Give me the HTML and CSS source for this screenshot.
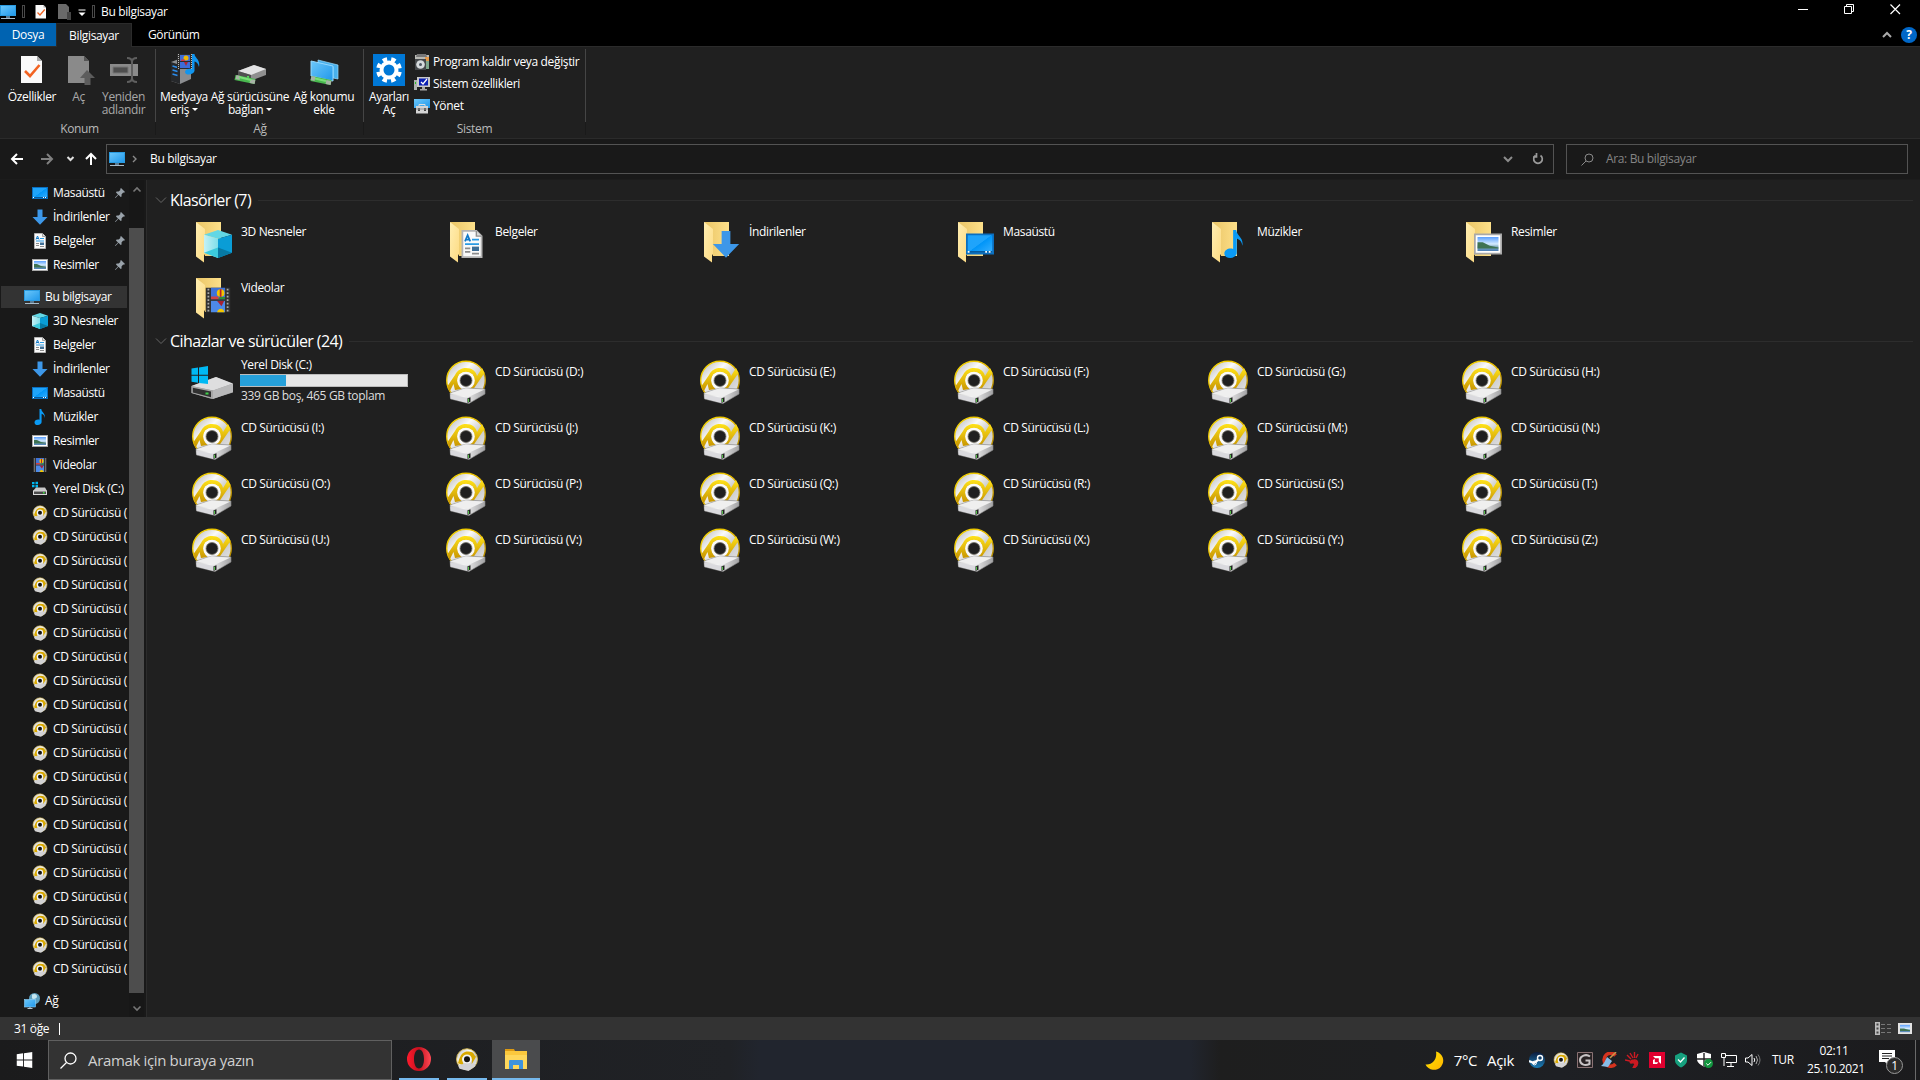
FILE: index.html
```html
<!DOCTYPE html>
<html lang="tr">
<head>
  <meta charset="UTF-8">
  <title>Bu bilgisayar</title>
  <link rel="stylesheet" href="styles.css">
</head>

<body>

  <!-- shared icons -->
  <svg class="sprite" width="0" height="0">
    <defs>
      <linearGradient id="g-screen" x1="0" y1="0" x2="1" y2="1">
        <stop offset="0" stop-color="#6cc8fb"/><stop offset="1" stop-color="#1f97ea"/>
      </linearGradient>
      <linearGradient id="g-desk" x1="0" y1="0" x2="1" y2="1">
        <stop offset="0" stop-color="#1ea4fb"/><stop offset=".48" stop-color="#1fa4fb"/><stop offset=".5" stop-color="#0095f8"/><stop offset="1" stop-color="#3db2ff"/>
      </linearGradient>
      <linearGradient id="g-folder" x1="0" y1="0" x2="1" y2="0">
        <stop offset="0" stop-color="#eac566"/><stop offset="1" stop-color="#fde08a"/>
      </linearGradient>
      <linearGradient id="g-flap" x1="0" y1="0" x2="1" y2="1">
        <stop offset="0" stop-color="#ffeeb2"/><stop offset="1" stop-color="#fddb83"/>
      </linearGradient>
      <linearGradient id="g-disc" x1="0" y1="0" x2="1" y2="1">
        <stop offset="0" stop-color="#b0b0b0"/><stop offset=".35" stop-color="#fafafa"/><stop offset=".6" stop-color="#c9c9c9"/><stop offset="1" stop-color="#eeeeee"/>
      </linearGradient>
      <linearGradient id="g-swoosh" x1="0" y1="0" x2="0" y2="1">
        <stop offset="0" stop-color="#ffe21a"/><stop offset="1" stop-color="#c49000"/>
      </linearGradient>
      <linearGradient id="g-edge" x1="0" y1="0" x2="1" y2="1">
        <stop offset="0" stop-color="#f5d800"/><stop offset=".5" stop-color="#e6b800"/><stop offset="1" stop-color="#9a7400"/>
      </linearGradient>
      <linearGradient id="g-drive" x1="0" y1="0" x2="1" y2="0">
        <stop offset="0" stop-color="#cfcfcf"/><stop offset=".4" stop-color="#f4f4f4"/><stop offset="1" stop-color="#a2a2a4"/>
      </linearGradient>
      <linearGradient id="g-sky" x1="0" y1="0" x2="0" y2="1">
        <stop offset="0" stop-color="#5a9fff"/><stop offset=".5" stop-color="#d5ebff"/><stop offset=".7" stop-color="#7fa9c0"/><stop offset="1" stop-color="#4c7fb8"/>
      </linearGradient>
      <linearGradient id="g-cube" x1="0" y1="0" x2="1" y2="0">
        <stop offset="0" stop-color="#c4f1f6"/><stop offset="1" stop-color="#7fdfea"/>
      </linearGradient>
      <linearGradient id="g-opera" x1="0" y1="0" x2="1" y2="0">
        <stop offset="0" stop-color="#ff1b2d"/><stop offset=".5" stop-color="#c4101e"/><stop offset="1" stop-color="#ff4a55"/>
      </linearGradient>
      <linearGradient id="g-steam" x1="0" y1="0" x2="0" y2="1">
        <stop offset="0" stop-color="#0c1b3c"/><stop offset="1" stop-color="#1a7fb8"/>
      </linearGradient>
      <linearGradient id="g-moon" x1="0" y1="0" x2="1" y2="1">
        <stop offset="0" stop-color="#ffe600"/><stop offset="1" stop-color="#ffb400"/>
      </linearGradient>
    </defs>

    <symbol id="pc" viewBox="0 0 16 16">
      <rect x=".5" y="1.5" width="15" height="10" fill="url(#g-screen)" stroke="#2a9be0"/>
      <path d="M6 12h4v2H6z" fill="#5b7c94"/>
      <path d="M1 14h14v1H1z" fill="#a8bccb"/>
    </symbol>

    <symbol id="desktop" viewBox="0 0 16 16">
      <rect x=".5" y="2.5" width="15" height="11" fill="url(#g-desk)" stroke="#0a6fc0"/>
      <path d="M1 12.500h14" stroke="#075a9c"/>
      <path d="M1 12.500h1M11 12.500h1M13 12.500h1" stroke="#fff"/>
    </symbol>

    <symbol id="downloads" viewBox="0 0 16 16">
      <path d="M5.500.5h5v7.500h5L8 15.800.5 8h5z" fill="#3d97e8"/>
    </symbol>

    <symbol id="docs" viewBox="0 0 16 16">
      <path d="M2.500.500h8l3 3v12h-11z" fill="#fafafa" stroke="#b4b4b4"/>
      <path d="M10.500.5v3h3" fill="#ddd" stroke="#909090" stroke-width=".8"/>
      <path d="M4 6.500L5.500 3 7 6.500M4.500 5.500h2" fill="none" stroke="#1079c8"/>
      <path d="M8 5.500h4M4 8h8" stroke="#2a9ae4"/>
      <path d="M4 10.500h3M4 12.500h3M8 13.500h4" stroke="#8c8c8c"/>
      <path d="M8 9.500h4v2.500H8z" fill="#3f6f97"/>
    </symbol>

    <symbol id="pics" viewBox="0 0 16 16">
      <rect x=".5" y="2.500" width="15" height="11" fill="#fff" stroke="#a9a9a9"/>
      <rect x="2" y="4" width="12" height="8" fill="url(#g-sky)"/>
      <path d="M2 7l3 0 4 2 5 1v.5H2z" fill="#3f7353"/>
    </symbol>

    <symbol id="music" viewBox="0 0 16 16">
      <path d="M7.500 0h1.800c.3 3.500 4.300 4.200 3.500 9-.3-2.600-1.700-3.600-3.200-4.200V13c0 1.600-1.700 3-3.700 3S2.500 15 2.500 13.400c0-2 2.500-3.300 5-2.600z" fill="#0a9af5"/>
    </symbol>

    <symbol id="video" viewBox="0 0 16 16">
      <path d="M1 1h14v14H1z" fill="#333"/>
      <path d="M4 1h8v6.500H4z" fill="#3f73d8"/><path d="M4 8.500h8V15H4z" fill="#4d8ae8"/>
      <path d="M4 6h4l1 1.500H4z" fill="#d04444"/><path d="M9 6.300h3v1.200H8z" fill="#2c8b3c"/>
      <circle cx="9.500" cy="4" r="2.200" fill="#f3c600"/><path d="M9.500 1.800v4.400" stroke="#b8242c"/>
      <path d="M7.500 8.500h4l-1.500 3z" fill="#a82231"/><path d="M7.500 15c.3-2.700 4-2.700 4.200 0z" fill="#f3c600"/>
      <path d="M2.500 1.500v13M13.500 1.500v13" stroke="#aaa" stroke-dasharray="1 1"/>
    </symbol>

    <symbol id="cube" viewBox="0 0 16 16">
      <path d="M8 0l8 2.700L8 5 0 2.700z" fill="#62d7e5"/>
      <path d="M0 2.700L8 5v11l-8-3z" fill="url(#g-cube)"/>
      <path d="M16 2.700L8 5v11l8-3z" fill="#0a9dd6"/>
      <path d="M0 13l8-3v6z" fill="#3bcbdd"/><path d="M16 13l-8-3v6z" fill="#0779a3"/>
    </symbol>

    <symbol id="winflag" viewBox="0 0 16 16">
      <path d="M0 2.200L6.600 1.300v6.200H0zM7.500 1.200L16 0v7.500H7.500zM0 8.400h6.600v6.200L0 13.700zM7.500 8.400H16V16l-8.500-1.200z"/>
    </symbol>

    <symbol id="drive16" viewBox="0 0 16 16">
      <path d="M0 1h2.500v2.200H0zM3.500.7H6v2.500H3.500zM0 4h2.500v2.200H0zM3.500 4H6v2.500H3.500z" fill="#00b7f1"/>
      <path d="M4 6.500h9l2 3.500H1z" fill="#c8c8c8"/><path d="M1 9.500h14V14H1z" fill="#d9d9d9"/>
      <path d="M2 10.500h12V13H2z" fill="#4a4a4a"/><path d="M11 11h1.500v1.500H11z" fill="#3be23b"/>
    </symbol>

    <symbol id="disc" viewBox="0 0 40 44">
      <circle cx="20" cy="20.500" r="19.300" fill="url(#g-disc)" stroke="url(#g-edge)" stroke-width="1.400"/>
      <path d="M1.500 26L9 15C12 9.500 16 8 20 8c6 0 10 3.500 11 8l5-8 2.500 5-11 16h-5c5-4 6.500-8 5-12.500-1-3-4-4.500-7.500-4.500-4 0-7 2-8 5-1 4 0 9 3.500 12L9 30l-1.500-6L3.500 32z" fill="url(#g-swoosh)"/>
      <circle cx="20" cy="20.500" r="8.800" fill="#fafafa"/>
      <circle cx="20" cy="20.500" r="6" fill="#202020" stroke="#77756a" stroke-width=".8"/>
      <path d="M4 33l16-5 19 1v5l-16 9.500L4.500 39z" fill="url(#g-drive)" stroke="#8a8a8a" stroke-width=".6"/>
      <path d="M4 33.500l15-5L38.500 29.500 22.500 37z" fill="#efefef"/>
      <path d="M4.300 34.500L22 38v5l-17.500-4.500z" fill="#dadade"/>
      <path d="M21.500 38.300l3-1v4.500l-3 1.200z" fill="#222"/><path d="M22.500 38.700v3.300" stroke="#57c04b"/>
    </symbol>

    <symbol id="disc16" viewBox="0 0 16 16">
      <circle cx="8" cy="7.800" r="7" fill="url(#g-disc)" stroke="#d8bb50" stroke-width=".6"/>
      <path d="M2 10.500C3.500 4 6 2.600 9 2.700s3.500 1.300 4 2.500l1 1-4 7c2-3 2-7-2-7.500S4.500 8 6 12z" fill="#d9a900"/>
      <circle cx="8" cy="7.800" r="3.200" fill="#f4f4f4"/><circle cx="8" cy="7.800" r="2" fill="#141414"/>
      <path d="M2 12l5-1.500 6.500.5v1.500L9 15.700l-6-1.500z" fill="#d2d2d4"/>
    </symbol>

    <symbol id="folder" viewBox="0 0 48 48">
      <path d="M8 4h25v34H17z" fill="url(#g-folder)"/>
      <path d="M8 4l9 7v25l-1 1v7.500L8 38.500z" fill="url(#g-flap)"/>
    </symbol>

    <symbol id="cdrive" viewBox="0 0 48 48">
      <path d="M3.500 28L28 19l17 7v8.500L24 41 3.500 35z" fill="#9c9c9c"/>
      <path d="M3.500 28L28 19l17 6.500-20 7z" fill="#dededf"/>
      <path d="M25 32.500l20-7v8.500l-20 7z" fill="#b9b9ba"/>
      <path d="M3.500 28L25 32.500V41L3.500 35z" fill="#a7a7a7"/>
      <path d="M4.800 29.700L23 33.500v5.800L4.800 34.500z" fill="#303030"/>
      <path d="M17.500 34.500h3v2h-3z" fill="#3fd24a"/>
      <path d="M3.500 10.500l6.500-1v7.300H3.500zM11 9.400l9-1.400v8.800h-9zM3.500 17.800H10v7l-6.500-1zM11 17.800h9V26l-9-1z" fill="#00b9f4"/>
    </symbol>

    <symbol id="pin" viewBox="0 0 10 10">
      <path d="M6 0l4 4-1 .8-.8-.2-1.700 1.800.1 2-.9.6L3.500 6.800.5 10 0 9.600 3 6.400 1 4.400l.6-.9 2 .1L5.400 1.900 5.200 1z" fill="#9aa3ab"/>
    </symbol>

    <symbol id="net" viewBox="0 0 16 16">
      <circle cx="10.500" cy="5.500" r="5.500" fill="#5d9fbe"/><path d="M8 1.500c3-1.500 5 0 5 2s-3 3-5 2z" fill="#c6e7f1"/>
      <rect x=".5" y="6.500" width="11" height="7.500" fill="url(#g-screen)" stroke="#8fd2fa" stroke-width=".6"/>
      <path d="M3.500 15.500h5M6 14v1.500" stroke="#b8c8d2"/>
    </symbol>

    <symbol id="check" viewBox="0 0 32 32">
      <path d="M5 2h16l5 5v22H5z" fill="#fafafa"/><path d="M21 2v5h5z" fill="#a9a9a9"/>
      <path d="M9 17l5 5 9.500-11" fill="none" stroke="#f26322" stroke-width="2.600"/>
    </symbol>

    <symbol id="open" viewBox="0 0 32 32">
      <path d="M5 2h16l5 5v22H5z" fill="#8a8a8a"/><path d="M21 2v5h5z" fill="#555"/>
      <path d="M24 16l8 8h-4.500v7h-6v-7H17z" fill="#5c5c5c"/>
    </symbol>
  </svg>

  <div class="titlebar">
    <svg class="ic16"><use href="#pc"/></svg>
    <span class="tick first"></span>
    <svg class="ic16 t-check"><use href="#check"/></svg>
    <svg class="t-open" width="14" height="16" viewBox="0 0 14 16"><path d="M1 0h8l3 3v12H1z" fill="#6a6a6a"/><path d="M10 8h4v8h-4z" fill="#454545"/></svg>
    <svg class="t-more" width="8" height="8" viewBox="0 0 8 8"><path d="M.5 1h7" stroke="#fff"/><path d="M.5 3.500h7L4 7z" fill="#fff"/></svg>
    <span class="tick"></span>
    <span class="title">Bu bilgisayar</span>
    <div class="controls">
      <svg width="11" height="11" viewBox="0 0 11 11"><path d="M0 5.500h10" stroke="#fff"/></svg>
      <svg width="11" height="11" viewBox="0 0 11 11"><path d="M.5 2.500h7v7h-7zM2.500 2.500v-2h7v7h-2" fill="none" stroke="#fff"/></svg>
      <svg width="11" height="11" viewBox="0 0 11 11"><path d="M.5.500l9.500 9.500M10 .5L.5 10" stroke="#fff" stroke-width="1.200"/></svg>
    </div>
  </div>

  <div class="tabs">
    <span class="tab file">Dosya</span>
    <span class="tab active">Bilgisayar</span>
    <span class="tab view">Görünüm</span>
    <svg class="collapse" width="10" height="8" viewBox="0 0 10 8"><path d="M1 6l4-4 4 4" fill="none" stroke="#aaa" stroke-width="2"/></svg>
    <span class="help">?</span>
  </div>

  <div class="ribbon">
    <div class="group g-konum">
      <div class="tools">
        <div class="tool w50"><svg class="ic32"><use href="#check"/></svg>Özellikler</div>
        <div class="tool w43 off"><svg class="ic32"><use href="#open"/></svg>Aç</div>
        <div class="tool w47 off">
          <svg class="ic32" viewBox="0 0 32 32"><path d="M2 10h28v12H2z" fill="#8a8a8a"/><path d="M5 13h15v6H5z" fill="#4e4e4e" stroke="#777"/><path d="M19 4c3 0 5 1 5 4 0-3 2-4 5-4M24 7v18M19 28c3 0 5-1 5-4 0 3 2 4 5 4" fill="none" stroke="#5f5f5f" stroke-width="2"/></svg>
          Yeniden<br>adlandır
        </div>
      </div>
      <div class="caption">Konum</div>
    </div>
    <div class="group g-ag">
      <div class="tools">
        <div class="tool w48">
          <svg class="ic32" viewBox="0 0 32 32">
            <path d="M3 8l8-3 12 2v18l-11 5-9-3z" fill="#8b8d90"/><path d="M3 8l9 3v19l-9-3z" fill="#26282b"/>
            <path d="M4.500 12l5 1.500M4.500 16l5 1.500M4.500 20l5 1.500" stroke="#2b8bea" stroke-width="1.500"/>
            <path d="M9 0h16v15H9z" fill="#2b2b2b"/><path d="M12 1h10v6H12zM12 8h10v6H12z" fill="#3d6cd8"/>
            <circle cx="18" cy="4" r="2.500" fill="#f0b800"/><path d="M13 5.500h4v1.500h-4z" fill="#cf3b46"/><path d="M16 8h4l-2 4z" fill="#ae2530"/>
            <path d="M10.500 0v15M23.500 0v15" stroke="#bbb" stroke-dasharray="1 1"/>
            <path d="M24 0h2.500c0 4 6 5 4.500 13-1-4-2.500-5-4.500-5.500V17c-1 4-9 5-9.500 1 0-3 4-4 7-3z" fill="#1195ee"/>
          </svg>
          Medyaya<br>eriş <i class="caret"></i>
        </div>
        <div class="tool w84">
          <svg class="ic32" viewBox="0 0 32 32">
            <path d="M4 17l16-6 12 4v6l-16 6-12-4z" fill="#8f8f8f"/><path d="M4 17l16-6 12 4-15 6z" fill="#e3e3e4"/><path d="M4 17l13 4v6L4 23z" fill="#505050"/><path d="M13 22h2v2h-2z" fill="#57d65b"/>
            <path d="M1 23.500l20 4" stroke="#49b84f" stroke-width="5"/><path d="M2 23l4 1M16 27l5 1" stroke="#a7b4a5" stroke-width="4"/><path d="M5 23l12 3" stroke="#7ae077" stroke-width="2"/>
          </svg>
          Ağ sürücüsüne<br>bağlan <i class="caret"></i>
        </div>
        <div class="tool w64">
          <svg class="ic32" viewBox="0 0 32 32">
            <path d="M10 6l20 5v14l-5-1V13L10 9z" fill="#49b0ec" stroke="#9bdcff" stroke-width=".7"/>
            <path d="M3 7l22 5v15L3 22z" fill="url(#g-screen)" stroke="#95d9ff"/>
            <path d="M3 24.500l20 4" stroke="#49b84f" stroke-width="5"/><path d="M3 24l4 1M18 28l5 1" stroke="#a7b4a5" stroke-width="4"/><path d="M7 24.500l11 2.500" stroke="#7ae077" stroke-width="2"/>
          </svg>
          Ağ konumu<br>ekle
        </div>
      </div>
      <div class="caption">Ağ</div>
    </div>
    <div class="group g-sistem">
      <div class="tools">
        <div class="tool w44">
          <svg class="ic32" viewBox="0 0 32 32"><path d="M0 0h32v32H0z" fill="#0078d7"/><circle cx="16" cy="16" r="10.700" fill="none" stroke="#fff" stroke-width="4.400" stroke-dasharray="4.400 4"  transform="rotate(10 16 16)"/><circle cx="16" cy="16" r="7.500" fill="none" stroke="#fff" stroke-width="4"/></svg>
          Ayarları<br>Aç
        </div>
        <div class="small-tools">
          <div><svg class="ic16" viewBox="0 0 16 16"><path d="M1 1h14v5H1z" fill="#b9b9b4"/><path d="M3 0h9l1 3H2z" fill="#777"/><path d="M11 4h4v11h-4z" fill="#7fa68c"/><path d="M11 3h4v4h-4z" fill="#e59a4b"/><path d="M1 5h11v11H1z" fill="#45484b"/><circle cx="6.500" cy="10.500" r="4.300" fill="#d5d9dc"/><circle cx="6.500" cy="10.500" r="1.500" fill="#4c5560"/></svg>Program kaldır veya değiştir</div>
          <div><svg class="ic16" viewBox="0 0 16 16"><path d="M0 4h3v10H0z" fill="#aeb1ae"/><path d="M1 6h1v2H1z" fill="#29c329"/><path d="M3 1h13v10H3z" fill="#c9c9c9"/><path d="M5 2.500h9V9.500H5z" fill="#0a1fb4"/><path d="M7 6l2 2 4-5" fill="none" stroke="#fff" stroke-width="1.300"/><path d="M8 11h3v2h2v1.500H6V13h2z" fill="#a8a8a8"/></svg>Sistem özellikleri</div>
          <div><svg class="ic16" viewBox="0 0 16 16"><path d="M0 1h16v9H0z" fill="url(#g-screen)"/><path d="M5 8V6.500h6V8" fill="none" stroke="#ddd"/><path d="M2 8h12v7.500H2z" fill="#d4d4d4"/><path d="M4 10h2v3H4zM10 10h2v3h-2z" fill="#454545"/><path d="M2 11h12" stroke="#909090"/></svg>Yönet</div>
        </div>
      </div>
      <div class="caption">Sistem</div>
    </div>
  </div>

  <div class="navbar">
    <svg class="nav-arrows" width="96" height="16" viewBox="0 0 96 16">
      <path d="M13 8H2M7 3L2 8l5 5" fill="none" stroke="#fff" stroke-width="2"/>
      <path d="M31 8h11M37 3l5 5-5 5" fill="none" stroke="#808080" stroke-width="2"/>
      <path d="M57.500 6l3 3 3-3" fill="none" stroke="#e0e0e0" stroke-width="2"/>
      <path d="M81 14V3M76 8l5-5 5 5" fill="none" stroke="#fff" stroke-width="2"/>
    </svg>
    <div class="address">
      <svg class="ic16"><use href="#pc"/></svg>
      <svg class="crumb" width="6" height="8" viewBox="0 0 6 8"><path d="M1 1l3 3-3 3" fill="none" stroke="#8a8a8a" stroke-width="1.400"/></svg>
      <span>Bu bilgisayar</span>
      <svg class="addr-drop" width="10" height="8" viewBox="0 0 10 8"><path d="M1 2l4 4 4-4" fill="none" stroke="#8c8c8c" stroke-width="2"/></svg>
      <svg class="refresh" width="12" height="12" viewBox="0 0 12 12"><path d="M8.500 2.500A4.300 4.300 0 1 1 3.500 2.500M4.500 0v4H1" fill="none" stroke="#9a9a9a" stroke-width="1.700"/></svg>
    </div>
    <div class="search">
      <svg width="13" height="13" viewBox="0 0 13 13"><circle cx="8" cy="5" r="4" fill="none" stroke="#8a8a8a"/><path d="M5 8L.5 12.500" stroke="#8a8a8a"/></svg>
      <span>Ara: Bu bilgisayar</span>
    </div>
  </div>

  <div class="body">
    <div class="sidebar">
      <div class="tree" id="tree"></div>
      <div class="scrollbar">
        <svg width="10" height="7" viewBox="0 0 10 7"><path d="M1.500 5.500L5 2l3.500 3.500" fill="none" stroke="#777" stroke-width="1.600"/></svg>
        <div class="thumb"></div>
        <svg width="10" height="7" viewBox="0 0 10 7"><path d="M1.500 1.500L5 5l3.500-3.500" fill="none" stroke="#777" stroke-width="1.600"/></svg>
      </div>
    </div>
    <div class="content">
      <div class="section-head"><svg width="12" height="8" viewBox="0 0 12 8"><path d="M1 1.500l5 5 5-5" fill="none" stroke="#666"/></svg><span>Klasörler (7)</span><hr></div>
      <div class="grid" id="folders"></div>
      <div class="section-head second"><svg width="12" height="8" viewBox="0 0 12 8"><path d="M1 1.500l5 5 5-5" fill="none" stroke="#666"/></svg><span>Cihazlar ve sürücüler (24)</span><hr></div>
      <div class="grid" id="drives">
        <div class="item disk">
          <svg class="ic48"><use href="#cdrive"/></svg>
          <div class="info">
            <div>Yerel Disk (C:)</div>
            <div class="meter"><div class="fill"></div></div>
            <div class="sub">339 GB boş, 465 GB toplam</div>
          </div>
        </div>
      </div>
    </div>
  </div>

  <div class="status">
    <span>31 öğe</span><i class="cursor"></i>
    <div class="views">
      <svg width="17" height="13" viewBox="0 0 17 13"><path d="M0 0h5v13H0z" fill="#bcbcbc"/><path d="M1.500 1.500h2v2h-2zM1.500 5.500h2v2h-2zM1.500 9.500h2v2h-2z" fill="#444"/><path d="M6 2.500h4M12 2.500h4M6 6.500h4M12 6.500h4M6 10.500h4M12 10.500h4" stroke="#777"/></svg>
      <svg width="14" height="11" viewBox="1 2 14 12" preserveAspectRatio="none"><rect x="1" y="2" width="14" height="12" fill="#e4e4e4"/><rect x="3" y="4" width="10" height="8" fill="url(#g-sky)"/><path d="M3 8l4 0 6 2v.7H3z" fill="#3f7353"/></svg>
    </div>
  </div>

  <div class="taskbar">
    <div class="start"><svg width="17" height="16" viewBox="0 0 16 16" fill="#fff"><use href="#winflag"/></svg></div>
    <div class="task-search">
      <svg width="17" height="17" viewBox="0 0 17 17"><circle cx="10.500" cy="6.500" r="5.500" fill="none" stroke="#fff" stroke-width="1.300"/><path d="M6.500 10.500L.5 16.500" stroke="#fff" stroke-width="1.300"/></svg>
      <span>Aramak için buraya yazın</span>
    </div>
    <div class="apps">
      <div class="app"><svg width="24" height="24" viewBox="0 0 24 24"><path fill-rule="evenodd" d="M12 0a12 12 0 1 0 0 24a12 12 0 1 0 0-24zM12 2.500c3.200 0 5 4.200 5 9.500s-1.800 9.500-5 9.500S7 17.300 7 12s1.800-9.500 5-9.500z" fill="url(#g-opera)"/></svg></div>
      <div class="app"><svg width="24" height="25"><use href="#disc16"/></svg></div>
      <div class="app current"><svg width="22" height="22" viewBox="0 0 22 22"><path d="M0 1h9l1 2H0z" fill="#dd9a12"/><path d="M0 3h22v18H0z" fill="#fed75b"/><path d="M0 3h22v4H0z" fill="#fbc83d"/><path d="M4 21v-8q0-1 1-1h12q1 0 1 1v8h-4v-4H8v4z" fill="#3e93dd"/></svg></div>
    </div>
    <div class="weather">
      <svg width="19" height="19" viewBox="0 0 19 19"><path d="M11 .5A9.300 9.300 0 1 1 .5 13.500C7 14.500 12.500 8.500 11 .5z" fill="url(#g-moon)"/></svg>
      <span>7°C</span><span>Açık</span>
    </div>
    <div class="tray">
      <svg class="ic16" viewBox="0 0 16 16"><circle cx="8" cy="8" r="8" fill="url(#g-steam)"/><circle cx="11" cy="6" r="2.500" fill="none" stroke="#fff" stroke-width="1.400"/><path d="M0 9l5 2 4-3" fill="none" stroke="#fff" stroke-width="2.200"/><circle cx="5.500" cy="11" r="1.900" fill="none" stroke="#fff"/></svg>
      <svg class="ic16"><use href="#disc16"/></svg>
      <svg class="ic16" viewBox="0 0 16 16"><path d="M.5.500h15v15H.5z" fill="#282224" stroke="#8a7274"/><path d="M13 4.500C9 1.500 3 4 3 8s4.500 6.500 9.500 4V8.500H8.500" fill="none" stroke="#c8c4c6" stroke-width="2"/></svg>
      <svg class="ic16" viewBox="0 0 16 16"><path d="M14.500 3.500A6.500 6.500 0 1 0 14.500 12" fill="none" stroke="#d5331f" stroke-width="3.600"/><path d="M9 6L15 0" stroke="#c9944a" stroke-width="1.600"/><path d="M6 5l5 4-4 6-7-1c3-2 4-5 6-9z" fill="#87bce6"/></svg>
      <svg class="ic16" viewBox="0 0 16 16"><path d="M8 16c6-1 6-9 1-8-3 0-5 2-3 3 2 0 3-1 4 1zM5 9L0 8M6 7L2 3M8 6L5 1M9.500 6V0M11 6l2-4" fill="#cc1a22" stroke="#cc1a22" stroke-width="1.400"/></svg>
      <svg class="ic16" viewBox="0 0 16 16"><path d="M0 0h16v16H0z" fill="#e0002f"/><path d="M4 4h8v8l-2.200-2.200V6.200H6.200zM4 8l1.800-1.300v3.500h3.500L8 12H4z" fill="#fff"/></svg>
      <svg class="ic16" viewBox="0 0 16 16"><path d="M8 .5l6 3v5c0 3-3 5.500-6 7-3-1.500-6-4-6-7v-5z" fill="#16a07e"/><path d="M5 7.500l2.500 2.500L11.500 5.500" fill="none" stroke="#fff" stroke-width="1.300"/></svg>
      <svg class="ic16" viewBox="0 0 16 16"><path d="M7 0l7 2v5c0 4-4 6-7 7.500C4 13 0 11 0 7V2z" fill="#fff"/><path d="M7 1v13M0 7h14" stroke="#222" stroke-width="1.400"/><circle cx="11.500" cy="11.500" r="4.500" fill="#12963f"/><path d="M9.300 11.500l1.700 1.700 3-3" fill="none" stroke="#fff"/></svg>
      <svg class="ic16" viewBox="0 0 16 16"><path d="M5 3.500h10.500v7H5M3 6v8M10 11v3M6 14.500h7" fill="none" stroke="#fff"/><path d="M.5 1.500h4v4h-4z" fill="#222" stroke="#fff"/></svg>
      <svg class="ic16" viewBox="0 0 16 16"><path d="M.5 6v4h2.500l4 3.500v-11L3 6z" fill="none" stroke="#fff"/><path d="M9 6q1.500 2 0 4" fill="none" stroke="#fff"/><path d="M11 4q3 4 0 8" fill="none" stroke="#aaa"/><path d="M13 2.500q4 5.500 0 11" fill="none" stroke="#777"/></svg>
    </div>
    <span class="lang">TUR</span>
    <div class="clock"><div>02:11</div><div>25.10.2021</div></div>
    <div class="notify">
      <svg width="16" height="16" viewBox="0 0 16 16"><path d="M0 0h16v12H9v3l-3-3H0z" fill="#fff"/><path d="M3 3.500h10M3 6h10M3 8.500h7" stroke="#222"/></svg>
      <span class="badge">1</span>
    </div>
    <i class="peek"></i>
  </div>

  <script src="script.js"></script>
</body>
</html>
```

FILE: styles.css
```css
body {
  margin: 0;
  width: 1920px;
  height: 1080px;
  overflow: hidden;
  display: flex;
  flex-direction: column;
  background: #191919;
  color: #fff;
  font-family: "Open Sans", "Noto Sans", sans-serif;
  font-size: 12px;
  letter-spacing: -0.35px;
  line-height: 16px;
  white-space: nowrap;
}

svg {
  display: block;
  flex: none;
}

.sprite {
  position: absolute;
}

.ic16 {
  width: 16px;
  height: 16px;
}

.ic32 {
  width: 32px;
  height: 32px;
}

.ic48 {
  width: 48px;
  height: 48px;
}

/* title bar */
.titlebar {
  height: 23px;
  background: #000;
  display: flex;
  align-items: center;
}

.tick {
  width: 1px;
  height: 11px;
  border: 1px solid #4a4a4a;
  margin-right: 6px;
}

.tick.first {
  margin: 0 8px 0 6px;
}

.t-open {
  margin-left: 8px;
}

.t-more {
  margin: 2px 6px 0 7px;
}

.controls {
  margin: 0 19px 4px auto;
  display: flex;
  gap: 35px;
}

/* tabs */
.tabs {
  height: 23px;
  background: #000;
  display: flex;
  line-height: 23px;
  align-items: center;
}

.tab.file {
  width: 56px;
  background: #0063b1;
  text-align: center;
}

.tab.active {
  box-sizing: border-box;
  width: 76px;
  height: 24px;
  background: #202020;
  border: 1px solid #2b2b2b;
  border-bottom: none;
  text-align: center;
  z-index: 1;
}

.tab.view {
  margin-left: 16px;
}

.collapse {
  margin-left: auto;
}

.help {
  width: 16px;
  height: 16px;
  margin: 0 3px 0 9px;
  border-radius: 50%;
  background: #0067c8;
  font-weight: bold;
  line-height: 16px;
  text-align: center;
}

/* ribbon */
.ribbon {
  box-sizing: border-box;
  height: 93px;
  background: #202020;
  border-top: 1px solid #2b2b2b;
  border-bottom: 1px solid #2b2b2b;
  display: flex;
}

.group {
  box-sizing: border-box;
  margin-top: 2px;
  height: 86px;
  border-right: 1px solid #2a2a2a;
  border-image: linear-gradient(#454545 72px, #1a1a1a 72px) 1;
  border-width: 0 1px 0 0;
}

.g-konum {
  width: 156px;
  padding-left: 7px;
}

.g-ag {
  width: 208px;
  padding-left: 4px;
}

.g-sistem {
  width: 222px;
  padding-left: 3px;
}

.tools {
  display: flex;
  height: 72px;
}

.tool {
  padding-top: 5px;
  text-align: center;
  line-height: 13px;
  display: block;
}

.tool svg {
  margin: 0 auto 4px;
}

.tool.off {
  color: #a8a8a8;
}

.w43 { width: 43px; }
.w44 { width: 44px; }
.w47 { width: 47px; }
.w48 { width: 48px; }
.w50 { width: 50px; }
.w64 { width: 64px; }
.w84 { width: 84px; }

.caret {
  display: inline-block;
  border: 3px solid transparent;
  border-top-color: #fff;
  border-bottom: none;
  vertical-align: 3px;
}

.small-tools {
  display: grid;
  grid-template-rows: repeat(3, 22px);
  margin: 2px 0 0 3px;
}

.small-tools div {
  display: flex;
  align-items: center;
  gap: 3px;
}

.caption {
  height: 14px;
  line-height: 14px;
  margin: 1px 3px 0 0;
  text-align: center;
  color: #b9b9b9;
}

/* address row */
.navbar {
  height: 41px;
  padding: 5px 12px 0 10px;
  box-sizing: border-box;
  display: flex;
  border-bottom: 1px solid #1c1c1c;
}

.nav-arrows {
  margin-top: 7px;
}

.address,
.search {
  box-sizing: border-box;
  height: 30px;
  border: 1px solid #535353;
  display: flex;
  align-items: center;
}

.address {
  width: 1448px;
  padding: 0 9px 0 2px;
}

.crumb {
  margin: 0 12px 0 7px;
}

.addr-drop {
  margin-left: auto;
}

.refresh {
  margin-left: 19px;
}

.search {
  width: 342px;
  margin-left: 12px;
  padding-left: 14px;
  gap: 12px;
  color: #858585;
}

/* main area */
.body {
  height: 837px;
  display: flex;
}

.sidebar {
  width: 147px;
  box-sizing: border-box;
  display: flex;
  border-right: 1px solid #2b2b2b;
}

.tree {
  width: 129px;
  overflow: hidden;
  padding-top: 1px;
}

.node {
  height: 24px;
  box-sizing: border-box;
  padding-left: 32px;
  display: flex;
  align-items: center;
  gap: 5px;
}

.node.top {
  padding-left: 24px;
  margin-top: 8px;
}

.node.selected {
  height: 22px;
  margin: 9px 2px 1px 1px;
  padding-left: 23px;
  background: #333;
}

.node .pin {
  width: 10px;
  height: 10px;
  margin: 0 4px 0 auto;
}

.scrollbar {
  width: 15px;
  background: #171717;
  display: flex;
  flex-direction: column;
  align-items: center;
  padding: 6px 0 5px;
}

.thumb {
  width: 15px;
  height: 765px;
  margin: 35px 0 auto;
  background: #4d4d4d;
}

.content {
  flex: 1;
  background: #202020;
  padding: 8px 7px 0 8px;
}

.section-head {
  height: 24px;
  display: flex;
  align-items: center;
  font-size: 16px;
  letter-spacing: -0.6px;
}

.section-head.second {
  margin-top: 3px;
}

.section-head span {
  margin: 0 7px 0 3px;
}

.section-head hr {
  flex: 1;
  border: none;
  height: 1px;
  margin: 0;
  background: #2d2d2d;
}

.grid {
  display: grid;
  grid-template-columns: repeat(6, 254px);
  grid-auto-rows: 56px;
  padding: 2px 0 0 33px;
}

.second + .grid {
  padding-top: 1px;
}

.item {
  display: flex;
  gap: 5px;
  padding-top: 4px;
}

.item .label {
  padding-top: 6px;
}

.thumb-icon {
  position: relative;
}

.overlay {
  position: absolute;
  right: 4px;
  bottom: 12px;
  width: 28px;
  height: 28px;
}

.overlay.low {
  bottom: 6px;
}

.disc {
  width: 40px;
  height: 44px;
  margin: 2px 4px 0;
}

.disk .info {
  margin-top: -1px;
}

.disk .info > div {
  line-height: 15px;
}

.disk .meter {
  box-sizing: border-box;
  width: 168px;
  height: 13px;
  margin: 2px 0 1px -1px;
  border: 1px solid #bcbcbc;
  border-left: none;
  background: #e6e6e6;
}

.fill {
  width: 46px;
  height: 11px;
  background: #26a0da;
}

.disk .sub {
  color: #dedede;
}

/* status bar */
.status {
  height: 23px;
  background: #333;
  display: flex;
  align-items: center;
  padding: 0 8px 0 14px;
}

.cursor {
  width: 1px;
  height: 12px;
  margin-left: 10px;
  background: #fff;
}

.views {
  margin-left: auto;
  display: flex;
  align-items: center;
  gap: 6px;
}

/* taskbar */
.taskbar {
  height: 40px;
  background: linear-gradient(90deg, #1b1b1c 0, #202226 730px, #21252e 760px, #21252e 1190px, #1e1e1e 1220px, #1e2024 1560px, #1b1b1d 100%);
  display: flex;
  align-items: center;
}

.start {
  width: 48px;
  display: flex;
  justify-content: center;
}

.task-search {
  box-sizing: border-box;
  width: 344px;
  height: 40px;
  border: 1px solid #606060;
  background: #333;
  display: flex;
  align-items: center;
  gap: 11px;
  padding-left: 11px;
  color: #d0d0d0;
  font-size: 15px;
}

.apps {
  display: flex;
  gap: 1px;
  margin-left: 6px;
}

.app {
  box-sizing: border-box;
  width: 40px;
  height: 40px;
  border-bottom: 2px solid #76b9ed;
  display: flex;
  align-items: center;
  justify-content: center;
  margin: 0 4px 0 3px;
}

.app:first-child {
  margin-left: 1px;
}

.app.current {
  width: 48px;
  background: #4a4b4d;
  margin: 0;
}

.weather {
  display: flex;
  align-items: center;
  font-size: 15px;
  gap: 10px;
  margin-left: auto;
}

.tray {
  display: flex;
  gap: 8px;
  margin-left: 15px;
}

.lang {
  width: 22px;
  margin-left: 11px;
}

.clock {
  width: 54px;
  margin-left: 13px;
  text-align: center;
  line-height: 18px;
}

.notify {
  position: relative;
  margin: -4px 20px 0 18px;
}

.badge {
  position: absolute;
  left: 7px;
  top: 7px;
  width: 15px;
  height: 15px;
  border: 1px solid #999;
  border-radius: 50%;
  background: #2b2b2b;
  text-align: center;
  line-height: 15px;
}

.peek {
  width: 1px;
  height: 40px;
  margin-right: 4px;
  background: #6a6a6a;
}
```

FILE: script.js
```js
const tree = document.getElementById('tree');
const folders = document.getElementById('folders');
const drives = document.getElementById('drives');

function addNode(icon, text, cls, pinned) {
  const row = document.createElement('div');
  row.className = 'node ' + (cls || '');
  row.innerHTML = `<svg class="ic16"><use href="#${icon}"/></svg><span>${text}</span>` +
    (pinned ? '<svg class="pin"><use href="#pin"/></svg>' : '');
  tree.appendChild(row);
}

addNode('desktop', 'Masaüstü', '', true);
addNode('downloads', 'İndirilenler', '', true);
addNode('docs', 'Belgeler', '', true);
addNode('pics', 'Resimler', '', true);

addNode('pc', 'Bu bilgisayar', 'top selected');
addNode('cube', '3D Nesneler');
addNode('docs', 'Belgeler');
addNode('downloads', 'İndirilenler');
addNode('desktop', 'Masaüstü');
addNode('music', 'Müzikler');
addNode('pics', 'Resimler');
addNode('video', 'Videolar');
addNode('drive16', 'Yerel Disk (C:)');
for (let i = 0; i < 20; i++) {
  addNode('disc16', 'CD Sürücüsü (');
}
addNode('net', 'Ağ', 'top');

const folderList = [
  ['cube', '3D Nesneler'],
  ['docs', 'Belgeler'],
  ['downloads', 'İndirilenler'],
  ['desktop', 'Masaüstü'],
  ['music', 'Müzikler'],
  ['pics', 'Resimler'],
  ['video', 'Videolar']
];

folderList.forEach(([icon, name]) => {
  folders.innerHTML += `
    <div class="item">
      <div class="thumb-icon">
        <svg class="ic48"><use href="#folder"/></svg>
        <svg class="overlay o-${icon}"><use href="#${icon}"/></svg>
      </div>
      <span class="label">${name}</span>
    </div>`;
});

'DEFGHIJKLMNOPQRSTUVWXYZ'.split('').forEach(letter => {
  drives.innerHTML += `
    <div class="item">
      <svg class="disc"><use href="#disc"/></svg>
      <span class="label">CD Sürücüsü (${letter}:)</span>
    </div>`;
});
```
